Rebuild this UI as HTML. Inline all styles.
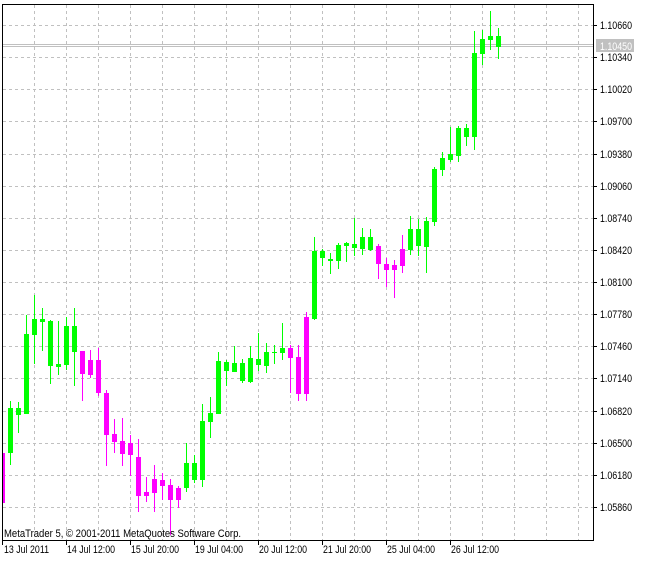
<!DOCTYPE html>
<html><head><meta charset="utf-8"><style>
html,body{margin:0;padding:0;background:#fff;width:646px;height:561px;overflow:hidden}
svg{display:block}
text{font-family:"Liberation Sans",sans-serif;font-size:11px;fill:#000}
</style></head><body>
<svg id="s" width="646" height="561" xmlns="http://www.w3.org/2000/svg">
<g id="grid" stroke="#c0c0c0" stroke-width="1" stroke-dasharray="3,3" shape-rendering="crispEdges"></g>
<line x1="2" y1="44.5" x2="593" y2="44.5" stroke="#c0c0c0"/>
<line x1="2" y1="46.5" x2="593" y2="46.5" stroke="#c0c0c0"/>
<g id="c" shape-rendering="crispEdges"></g>
<rect x="2.5" y="4.5" width="591" height="536" fill="none" stroke="#000" shape-rendering="crispEdges"/>
<g id="ticks" stroke="#000" shape-rendering="crispEdges"></g>
<text x="4" y="537" textLength="237" lengthAdjust="spacingAndGlyphs">MetaTrader 5, © 2001-2011 MetaQuotes Software Corp.</text>
<g>
<text x="600" y="29" textLength="32" lengthAdjust="spacingAndGlyphs">1.10660</text>
<text x="600" y="61" textLength="32" lengthAdjust="spacingAndGlyphs">1.10340</text>
<text x="600" y="93" textLength="32" lengthAdjust="spacingAndGlyphs">1.10020</text>
<text x="600" y="125" textLength="32" lengthAdjust="spacingAndGlyphs">1.09700</text>
<text x="600" y="158" textLength="32" lengthAdjust="spacingAndGlyphs">1.09380</text>
<text x="600" y="190" textLength="32" lengthAdjust="spacingAndGlyphs">1.09060</text>
<text x="600" y="222" textLength="32" lengthAdjust="spacingAndGlyphs">1.08740</text>
<text x="600" y="254" textLength="32" lengthAdjust="spacingAndGlyphs">1.08420</text>
<text x="600" y="286" textLength="32" lengthAdjust="spacingAndGlyphs">1.08100</text>
<text x="600" y="318" textLength="32" lengthAdjust="spacingAndGlyphs">1.07780</text>
<text x="600" y="350" textLength="32" lengthAdjust="spacingAndGlyphs">1.07460</text>
<text x="600" y="382" textLength="32" lengthAdjust="spacingAndGlyphs">1.07140</text>
<text x="600" y="415" textLength="32" lengthAdjust="spacingAndGlyphs">1.06820</text>
<text x="600" y="447" textLength="32" lengthAdjust="spacingAndGlyphs">1.06500</text>
<text x="600" y="479" textLength="32" lengthAdjust="spacingAndGlyphs">1.06180</text>
<text x="600" y="511" textLength="32" lengthAdjust="spacingAndGlyphs">1.05860</text>
</g>
<rect x="596" y="39" width="38" height="13" fill="#c0c0c0"/>
<text x="600" y="50" textLength="32" lengthAdjust="spacingAndGlyphs" style="fill:#fff">1.10450</text>
<g>
<text x="4" y="553" textLength="45" lengthAdjust="spacingAndGlyphs">13 Jul 2011</text>
<text x="67" y="553" textLength="48" lengthAdjust="spacingAndGlyphs">14 Jul 12:00</text>
<text x="131" y="553" textLength="48" lengthAdjust="spacingAndGlyphs">15 Jul 20:00</text>
<text x="195" y="553" textLength="48" lengthAdjust="spacingAndGlyphs">19 Jul 04:00</text>
<text x="259" y="553" textLength="48" lengthAdjust="spacingAndGlyphs">20 Jul 12:00</text>
<text x="323" y="553" textLength="48" lengthAdjust="spacingAndGlyphs">21 Jul 20:00</text>
<text x="387" y="553" textLength="48" lengthAdjust="spacingAndGlyphs">25 Jul 04:00</text>
<text x="451" y="553" textLength="48" lengthAdjust="spacingAndGlyphs">26 Jul 12:00</text>
</g>
</svg>
<script>
var NS="http://www.w3.org/2000/svg";
function el(p,t,a){var e=document.createElementNS(NS,t);for(var k in a)e.setAttribute(k,a[k]);p.appendChild(e);return e;}
var g=document.getElementById('grid');
for(var i=0;i<16;i++){var y=Math.round(25+32.13*i)+0.5;el(g,'line',{x1:3,y1:y,x2:593,y2:y});}
for(var x=34;x<593;x+=32){el(g,'line',{x1:x+0.5,y1:5,x2:x+0.5,y2:540});}
var t=document.getElementById('ticks');
for(var i=0;i<16;i++){var y=Math.round(25+32.13*i)+0.5;el(t,'line',{x1:593,y1:y,x2:597,y2:y});}
for(var x=2;x<=450;x+=64){el(t,'line',{x1:x+0.5,y1:540,x2:x+0.5,y2:545});}
var d=[[0,453,503,453,503],[1,408,453,401,465],[1,408,415,402,433],[1,334,414,315,414],[1,319,335,295,364],[1,319,322,308,351],[1,321,366,320,384],[1,364,367,321,375],[1,326,365,317,370],[1,326,352,308,386],
[0,351,374,351,401],[0,360,375,350,378],[0,360,393,348,396],[0,393,435,390,466],[0,434,442,419,453],[0,441,454,418,466],[0,443,455,435,476],[0,457,496,439,512],[0,492,496,477,502],[0,479,493,465,512],
[0,480,486,473,500],[0,485,500,479,535],[0,488,500,486,508],[1,463,488,443,492],[1,463,480,455,483],[1,421,480,404,487],[1,413,422,397,438],[1,361,414,352,414],[1,362,371,360,386],[1,363,372,346,372],
[1,363,381,359,383],[1,358,382,346,383],[1,359,365,333,371],[1,352,366,343,373],[1,352,353,345,364],[1,348,353,323,360],[0,348,358,345,393],[0,357,394,345,401],[0,317,394,312,401],[1,251,319,237,320],
[1,251,258,249,266],[1,259,261,253,274],[1,245,261,243,269],[1,243,246,242,262],[1,244,248,218,256],[1,237,249,228,255],[1,237,250,229,251],[0,246,264,244,279],[0,264,270,258,287],[0,265,270,260,298],
[0,249,266,235,273],[1,229,250,216,255],[1,229,246,219,256],[1,221,247,217,273],[1,169,222,167,226],[1,158,170,152,176],[1,154,160,127,162],[1,128,156,126,162],[1,128,137,124,146],[1,53,137,31,150],
[1,39,54,30,65],[1,36,40,11,50],[1,36,47,28,59]];
var c=document.getElementById('c');
d.forEach(function(a,k){var cx=2+8*k;var col=a[0]?'#00ff00':'#ff00ff';
el(c,'rect',{x:cx,y:a[3],width:1,height:a[4]-a[3],fill:col});
var bx=cx-2,bw=5;if(k==0){bx=3;bw=2;}
el(c,'rect',{x:bx,y:a[1],width:bw,height:Math.max(1,a[2]-a[1]),fill:col});});
</script>
</body></html>
